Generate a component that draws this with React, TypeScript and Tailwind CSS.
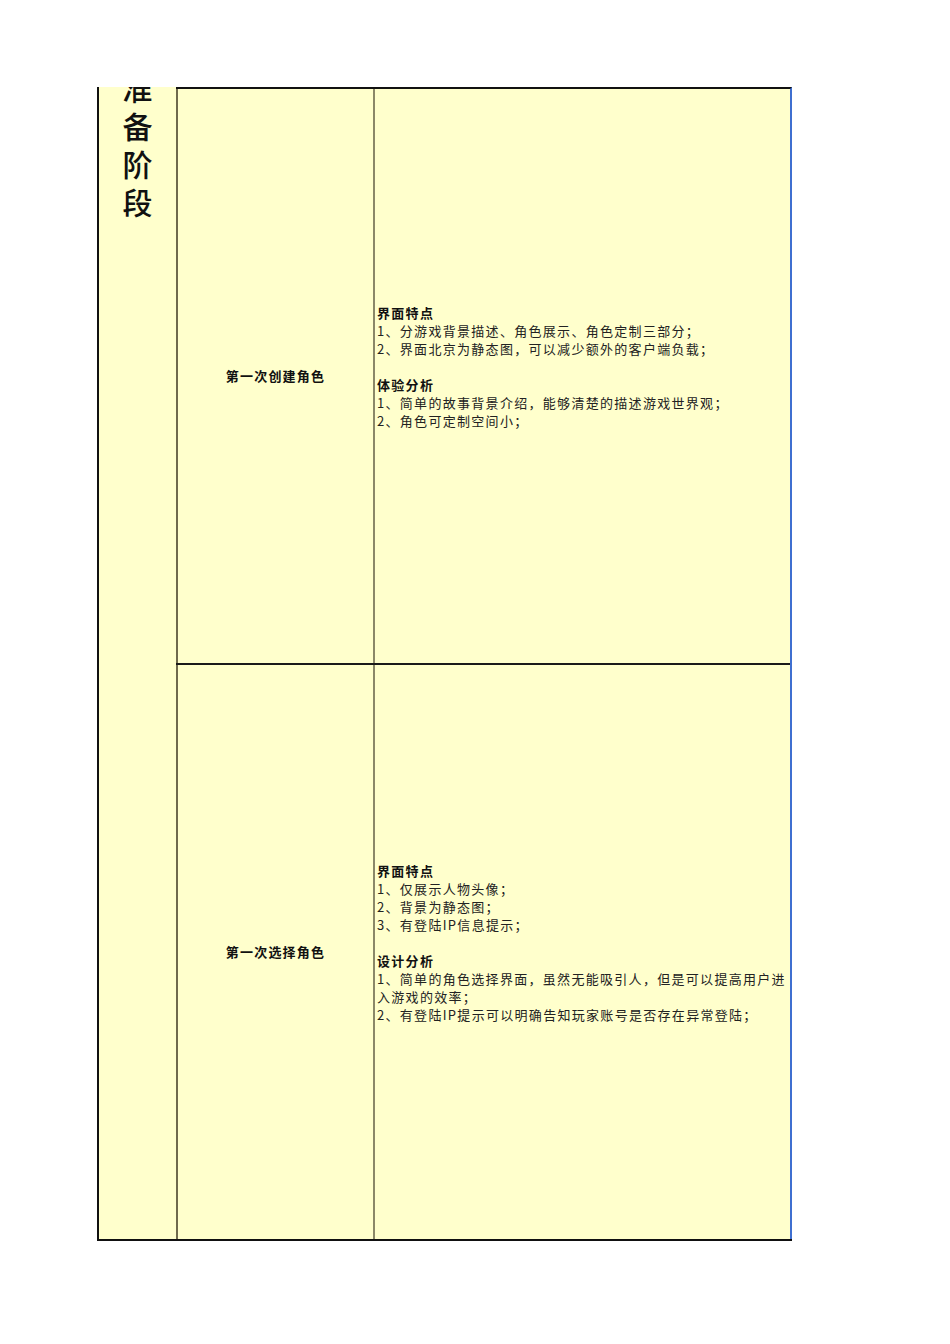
import React from "react";

const cjk = { fontFamily: '"Noto Sans CJK SC", "Noto Sans", sans-serif' };

function Row({
  title,
  h1,
  lines1,
  h2,
  lines2,
  height,
  last,
}: {
  title: string;
  h1: string;
  lines1: React.ReactNode[];
  h2: string;
  lines2: React.ReactNode[];
  height: string;
  last?: boolean;
}) {
  return (
    <div className={`flex ${height} ${last ? "" : "border-b-2 border-[#1a1a1a]"}`}>
      <div className="w-[197px] shrink-0 flex items-center justify-center border-l-2 border-[#6f6a4c]">
        <span className="text-[13px] font-bold tracking-[1.2px] text-[#111]">{title}</span>
      </div>
      <div className="flex-1 flex items-center border-l-[2px] border-[#8b8868] pl-[2px]">
        <div className="text-[13px] leading-[18px] tracking-[1.3px] text-[#222]">
          <div className="font-bold text-[#111]">{h1}</div>
          {lines1.map((l, i) => (
            <div key={i}>{l}</div>
          ))}
          <div>&nbsp;</div>
          <div className="font-bold text-[#111]">{h2}</div>
          {lines2.map((l, i) => (
            <div key={i}>{l}</div>
          ))}
          <div>&nbsp;</div>
        </div>
      </div>
    </div>
  );
}

export default function App() {
  return (
    <div className="w-[950px] h-[1344px] bg-white" style={cjk}>
      <div className="pt-[87px] pl-[97px]">
        <div className="flex w-[695px] h-[1154px] bg-[#FFFFCC] border-b-2 border-[#111]">
          <div className="w-[79px] shrink-0 border-l-2 border-[#111] overflow-hidden flex flex-col items-center">
            <div className="-mt-[19px] text-[30px] font-medium text-[#111] flex flex-col items-center">
              <div className="h-[38px] leading-[38px]">准</div>
              <div className="h-[38px] leading-[38px]">备</div>
              <div className="h-[38px] leading-[38px]">阶</div>
              <div className="h-[38px] leading-[38px]">段</div>
            </div>
          </div>
          <div className="flex-1 flex flex-col border-t-2 border-[#111] border-r-2 border-r-[#3f6fd0]">
            <Row
              height="h-[576px]"
              title="第一次创建角色"
              h1="界面特点"
              lines1={[
                "1、分游戏背景描述、角色展示、角色定制三部分；",
                "2、界面北京为静态图，可以减少额外的客户端负载；",
              ]}
              h2="体验分析"
              lines2={[
                "1、简单的故事背景介绍，能够清楚的描述游戏世界观；",
                "2、角色可定制空间小；",
              ]}
            />
            <Row
              height="flex-1"
              last
              title="第一次选择角色"
              h1="界面特点"
              lines1={[
                "1、仅展示人物头像；",
                "2、背景为静态图；",
                "3、有登陆IP信息提示；",
              ]}
              h2="设计分析"
              lines2={[
                "1、简单的角色选择界面，虽然无能吸引人，但是可以提高用户进",
                "入游戏的效率；",
                "2、有登陆IP提示可以明确告知玩家账号是否存在异常登陆；",
              ]}
            />
          </div>
        </div>
      </div>
    </div>
  );
}
